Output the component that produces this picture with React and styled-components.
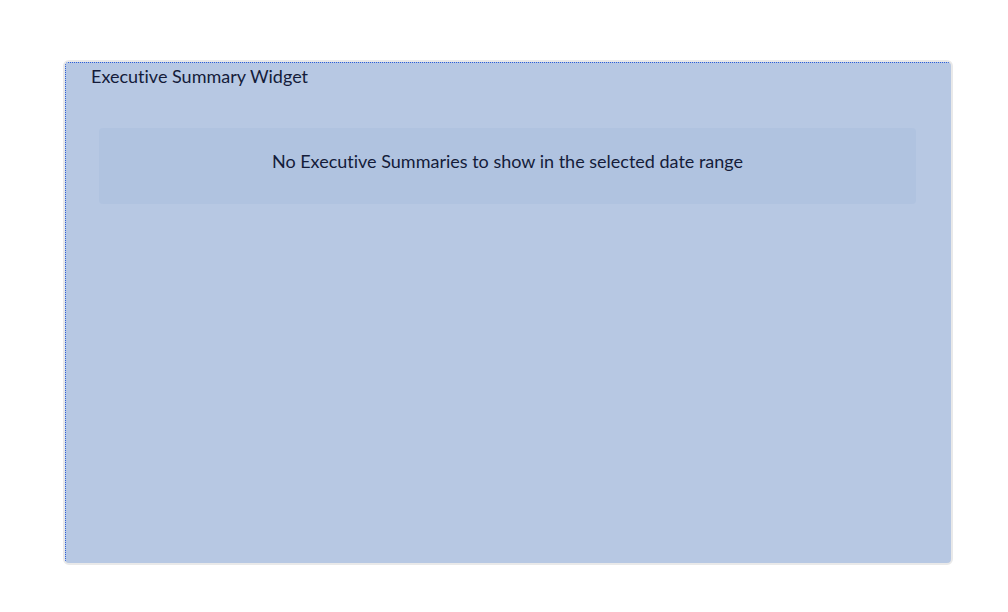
import React from "react";
import styled, { createGlobalStyle } from "styled-components";

const Global = createGlobalStyle`
  html, body { margin: 0; padding: 0; background: #ffffff; }
  body { font-family: Lato, "Open Sans", sans-serif; }
`;

const Page = styled.div`
  padding: 60px 56px 48px 63px;
`;

const Card = styled.section`
  width: 890px;
  height: 505px;
  box-sizing: border-box;
  border: 2px solid #e9e9e9;
  border-radius: 6px;
  background: #b7c8e3;
  overflow: hidden;
  display: flex;
`;

const Inner = styled.div`
  flex: 1;
  border-top: 1px dotted #2d5fd8;
  border-left: 1px dotted #2d5fd8;
  padding: 2px 35px 0 25px;
  display: flex;
  flex-direction: column;
  font-variant-ligatures: none;
`;

const Title = styled.h2`
  margin: 0;
  font-family: Lato, sans-serif;
  font-weight: 400;
  font-size: 18px;
  line-height: 22px;
  color: #141c3a;
`;

const Empty = styled.div`
  margin: 41px 0 0 8px;
  height: 76px;
  border-radius: 4px;
  background: #b0c3e0;
  display: flex;
  align-items: center;
  justify-content: center;
  font-family: Lato, sans-serif;
  font-size: 18px;
  color: #141c3a;
  padding-bottom: 10px;
  box-sizing: border-box;
`;

export default function App() {
  return (
    <>
      <Global />
      <Page>
        <Card>
          <Inner>
            <Title>Executive Summary Widget</Title>
            <Empty>No Executive Summaries to show in the selected date range</Empty>
          </Inner>
        </Card>
      </Page>
    </>
  );
}
